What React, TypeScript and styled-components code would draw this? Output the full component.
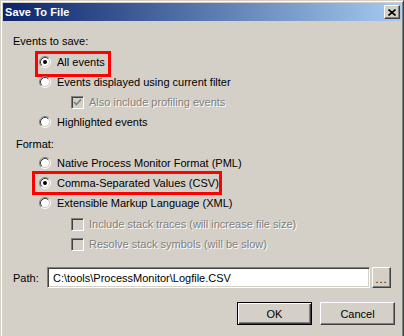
import React from 'react';
import styled, { createGlobalStyle } from 'styled-components';

const GlobalStyle = createGlobalStyle`
  html, body {
    margin: 0;
    padding: 0;
    overflow: hidden;
    background: #d4d0c8;
  }
  body {
    font-family: 'Liberation Sans', Arial, sans-serif;
    font-size: 11px;
    color: #000;
  }
`;

const Window = styled.div`
  width: 404px;
  height: 336px;
  box-sizing: border-box;
  overflow: hidden;
  background: #d4d0c8;
  border: 1px solid;
  border-bottom: 0;
  border-color: #d4d0c8 #404040 transparent #d4d0c8;
  box-shadow: inset 1px 1px 0 #fff, inset -1px 0 0 #808080;
  padding: 2px 2px 0 2px;
  display: flex;
  flex-direction: column;
`;

const TitleBar = styled.div`
  height: 18px;
  flex: none;
  display: flex;
  align-items: center;
  justify-content: space-between;
  padding: 0 1px 0 2px;
  background: linear-gradient(to right, #0a246a, #a6caf0);
`;

const Title = styled.span`
  color: #fff;
  font-weight: bold;
  font-size: 11px;
  letter-spacing: 0.1px;
`;

const CloseButton = styled.button`
  width: 16px;
  height: 14px;
  padding: 0;
  box-sizing: border-box;
  display: flex;
  align-items: center;
  justify-content: center;
  background: #d4d0c8;
  border: 1px solid;
  border-color: #fff #404040 #404040 #fff;
  box-shadow: inset -1px -1px 0 #808080;
`;

const Body = styled.div`
  display: flex;
  flex-direction: column;
  padding-top: 10px;
`;

const GroupLabel = styled.div<{ $inset: number }>`
  height: 20px;
  display: flex;
  align-items: center;
  padding-left: ${({ $inset }) => $inset}px;
`;

const OptionList = styled.div<{ $top: number }>`
  display: flex;
  flex-direction: column;
  margin-top: ${({ $top }) => $top}px;
`;

const Row = styled.div<{ $indent: number; $height?: number }>`
  height: ${({ $height }) => $height ?? 20}px;
  display: flex;
  align-items: center;
  padding-left: ${({ $indent }) => $indent}px;
`;

const Control = styled.span<{ $gap: number }>`
  position: relative;
  display: inline-flex;
  align-items: center;
  gap: ${({ $gap }) => $gap}px;
`;

// red annotation drawn over the screenshot
const Highlight = styled.span<{ $t: number; $r: number; $b: number; $l: number }>`
  position: absolute;
  top: ${({ $t }) => -$t}px;
  right: ${({ $r }) => -$r}px;
  bottom: ${({ $b }) => -$b}px;
  left: ${({ $l }) => -$l}px;
  border: 3px solid #ff0000;
  pointer-events: none;
`;

const Label = styled.span<{ $disabled?: boolean }>`
  line-height: 13px;
  white-space: nowrap;
  color: ${({ $disabled }) => ($disabled ? '#808080' : '#000')};
  text-shadow: ${({ $disabled }) => ($disabled ? '1px 1px 0 #fff' : 'none')};
`;

const RadioSvg = styled.svg`
  display: block;
  flex: none;
`;

const CheckBox = styled.span`
  width: 13px;
  height: 13px;
  box-sizing: border-box;
  flex: none;
  display: flex;
  align-items: center;
  justify-content: center;
  background: #d4d0c8;
  border: 1px solid;
  border-color: #808080 #fff #fff #808080;
  box-shadow: inset 1px 1px 0 #404040, inset -1px -1px 0 #d4d0c8;
`;

const PathRow = styled.div`
  display: flex;
  align-items: center;
  margin-top: 13px;
  padding-left: 10px;
`;

const PathLabel = styled.span`
  width: 34px;
`;

const PathInput = styled.div`
  width: 323px;
  height: 21px;
  box-sizing: border-box;
  display: flex;
  align-items: center;
  padding-left: 5px;
  background: #fff;
  border: 1px solid;
  border-color: #808080 #fff #fff #808080;
  box-shadow: inset 1px 1px 0 #404040, inset -1px -1px 0 #d4d0c8;
`;

const Button = styled.button<{ $default?: boolean; $w: number; $h: number }>`
  width: ${({ $w }) => $w}px;
  height: ${({ $h }) => $h}px;
  box-sizing: border-box;
  padding: 0;
  font-family: 'Liberation Sans', Arial, sans-serif;
  font-size: 11px;
  color: #000;
  background: #d4d0c8;
  border: 1px solid;
  border-color: ${({ $default }) => ($default ? '#000' : '#fff #404040 #404040 #fff')};
  box-shadow: ${({ $default }) =>
    $default
      ? 'inset 1px 1px 0 #fff, inset -1px -1px 0 #404040, inset -2px -2px 0 #808080'
      : 'inset -1px -1px 0 #808080'};
`;

const BrowseButton = styled(Button)`
  margin-left: 2px;
  padding-top: 2px;
  letter-spacing: 1px;
`;

const ButtonBar = styled.div`
  display: flex;
  justify-content: flex-end;
  gap: 8px;
  margin-top: 14px;
  padding-right: 6px;
`;

const Radio = ({ checked }: { checked?: boolean }) => (
  <RadioSvg width={12} height={12} viewBox="0 0 12 12">
    <circle cx="6" cy="6" r="4.2" fill="#fff" />
    <path d="M2.11 9.89 A5.5 5.5 0 0 1 9.89 2.11" stroke="#808080" fill="none" />
    <path d="M9.89 2.11 A5.5 5.5 0 0 1 2.11 9.89" stroke="#fff" fill="none" />
    <path d="M2.82 9.18 A4.5 4.5 0 0 1 9.18 2.82" stroke="#404040" fill="none" />
    <path d="M9.18 2.82 A4.5 4.5 0 0 1 2.82 9.18" stroke="#d4d0c8" fill="none" />
    {checked && <circle cx="6" cy="6" r="2" fill="#000" />}
  </RadioSvg>
);

const Check = ({ checked }: { checked?: boolean }) => (
  <CheckBox>
    {checked && (
      <svg width={9} height={9} viewBox="0 0 9 9">
        <path d="M1 4 L3.3 6.5 L8 1.5" stroke="#808080" strokeWidth={1.8} fill="none" />
      </svg>
    )}
  </CheckBox>
);

type Box = { t: number; r: number; b: number; l: number };

const RadioOption = ({ label, checked, box }: { label: string; checked?: boolean; box?: Box }) => (
  <Row $indent={36}>
    <Control $gap={6}>
      <Radio checked={checked} />
      <Label>{label}</Label>
      {box && <Highlight $t={box.t} $r={box.r} $b={box.b} $l={box.l} />}
    </Control>
  </Row>
);

const CheckOption = ({ label, checked }: { label: string; checked?: boolean }) => (
  <Row $indent={68}>
    <Control $gap={5}>
      <Check checked={checked} />
      <Label $disabled>{label}</Label>
    </Control>
  </Row>
);

export default function App() {
  return (
    <>
      <GlobalStyle />
      <Window>
        <TitleBar>
          <Title>Save To File</Title>
          <CloseButton aria-label="Close">
            <svg width={8} height={7} viewBox="0 0 8 7">
              <path d="M0.5 0.5 L7.5 6.5 M7.5 0.5 L0.5 6.5" stroke="#000" strokeWidth={1.6} />
            </svg>
          </CloseButton>
        </TitleBar>
        <Body>
          <GroupLabel $inset={10}>Events to save:</GroupLabel>
          <OptionList $top={1}>
            <RadioOption label="All events" checked box={{ t: 5, r: 6, b: 8, l: 4 }} />
            <RadioOption label="Events displayed using current filter" />
            <CheckOption label="Also include profiling events" checked />
            <RadioOption label="Highlighted events" />
          </OptionList>
          <OptionList $top={2}>
            <GroupLabel $inset={13}>Format:</GroupLabel>
          </OptionList>
          <OptionList $top={-1}>
            <RadioOption label="Native Process Monitor Format (PML)" />
            <RadioOption label="Comma-Separated Values (CSV)" checked box={{ t: 6, r: 3, b: 5, l: 7 }} />
            <RadioOption label="Extensible Markup Language (XML)" />
            <Row $indent={0} $height={1} />
            <CheckOption label="Include stack traces (will increase file size)" />
            <CheckOption label="Resolve stack symbols (will be slow)" />
          </OptionList>
          <PathRow>
            <PathLabel>Path:</PathLabel>
            <PathInput>C:\tools\ProcessMonitor\Logfile.CSV</PathInput>
            <BrowseButton $w={19} $h={21}>...</BrowseButton>
          </PathRow>
          <ButtonBar>
            <Button $default $w={75} $h={23}>OK</Button>
            <Button $w={75} $h={23}>Cancel</Button>
          </ButtonBar>
        </Body>
      </Window>
    </>
  );
}
